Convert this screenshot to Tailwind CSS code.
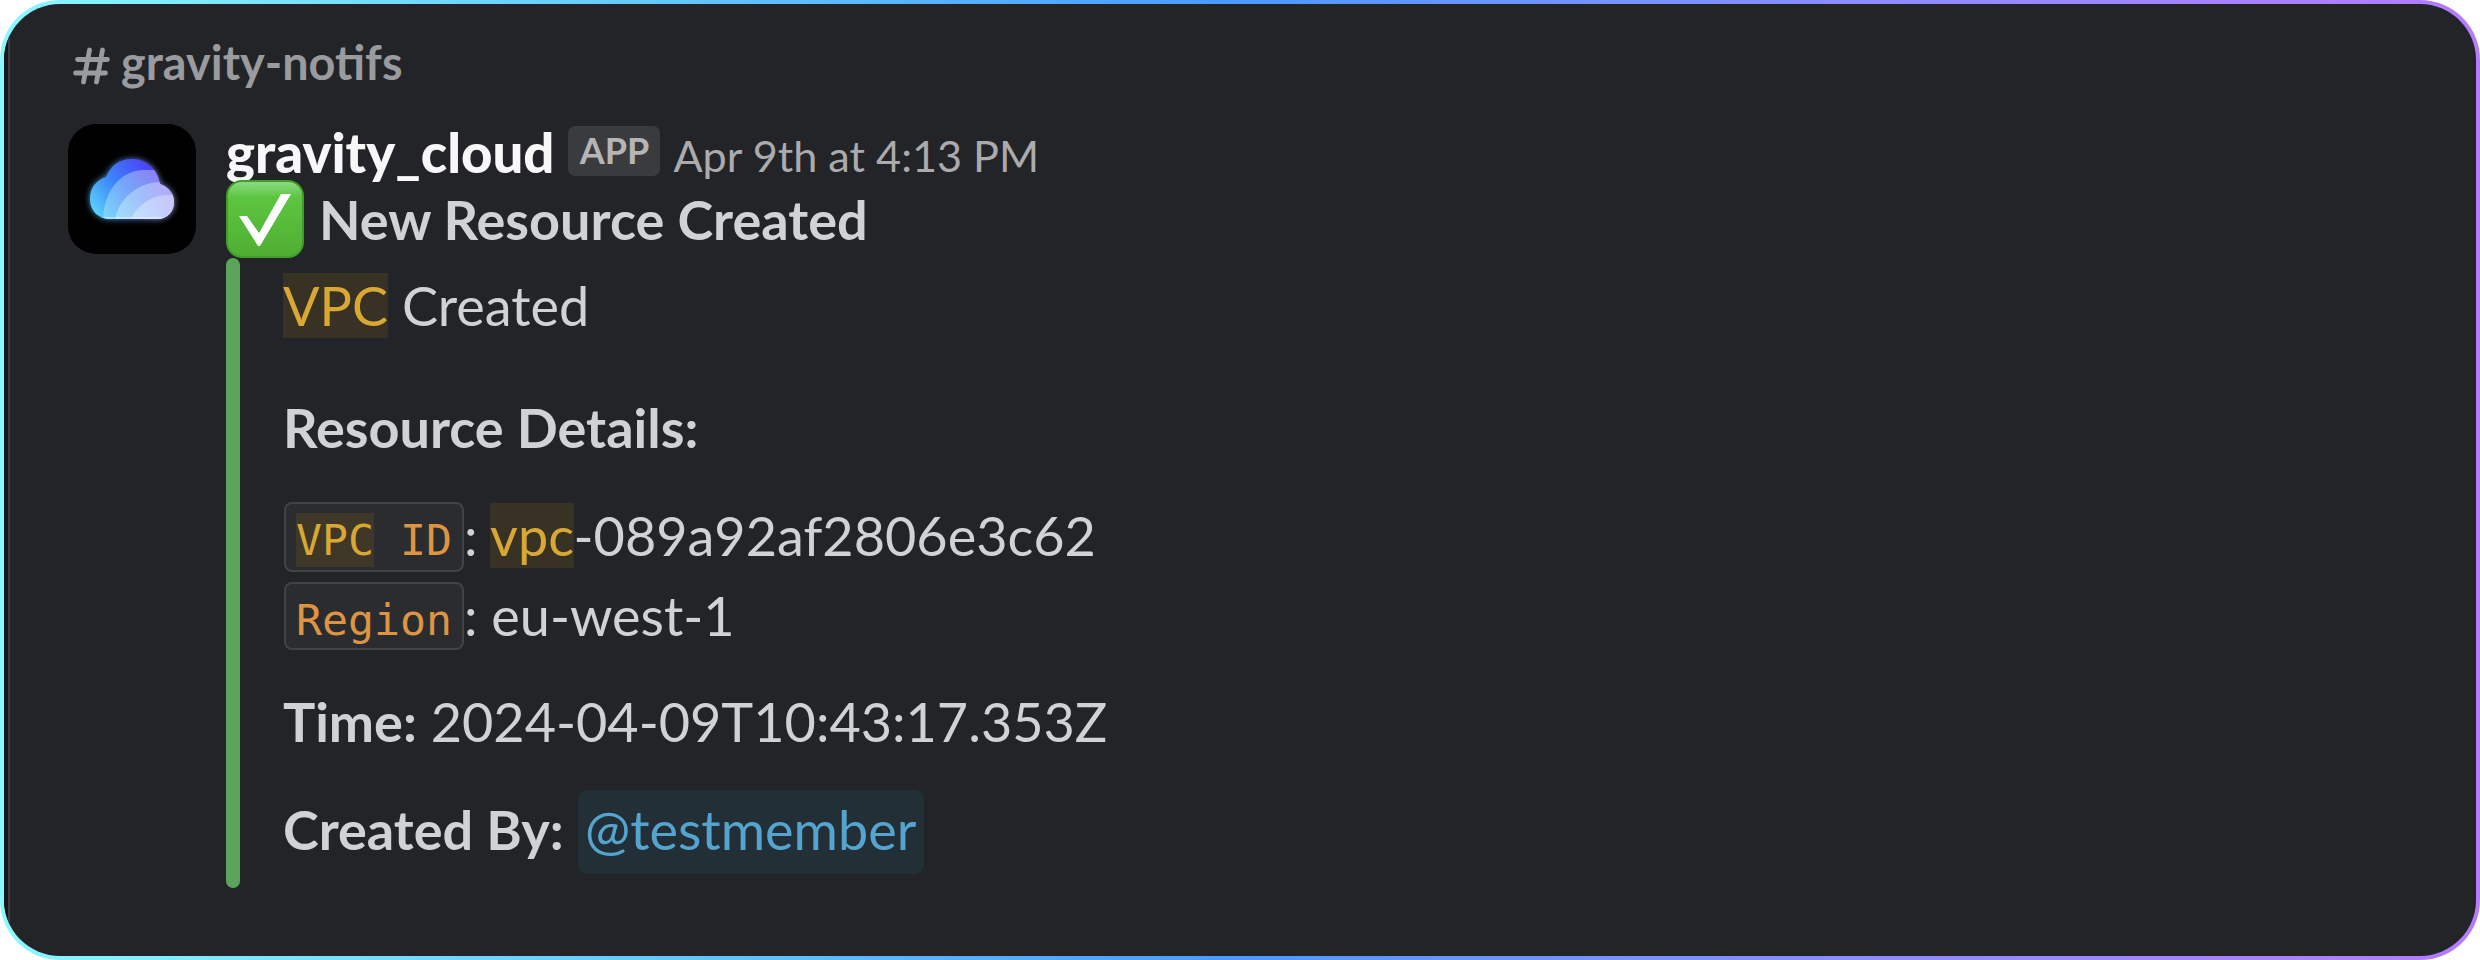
<!DOCTYPE html>
<html lang="en">
<head>
<meta charset="utf-8">
<title>gravity-notifs</title>
<script src="https://cdn.jsdelivr.net/npm/@tailwindcss/browser@4"></script>
</head>
<body class="bg-white">
<div class="w-[2480px] h-[960px] rounded-[60px] p-1 bg-linear-to-r from-[#8cf8ff] via-[#4a9aff] to-[#b57bff] font-['Lato',sans-serif] text-[#d1d2d3]">
  <div class="flex h-full rounded-[56px] overflow-hidden bg-[#232428]">
    <div class="w-1 shrink-0 bg-[#14161b]"></div>
    <div class="w-0.5 shrink-0 bg-[#3b3c40]"></div>
    <div class="flex-1 pl-[58px]">
      <div class="h-[120px] pt-[30px] pl-1 flex gap-[10px] text-[#9a9b9e] text-[46.8px] leading-[56px] font-bold">
        <svg class="w-[39px] h-[40px] mt-[12px]" viewBox="0 0 39 40" fill="none" stroke="currentColor" stroke-width="4.8" stroke-linecap="round"><path d="M17.500 4 11.500 36M30.500 4 24.500 36M5.500 13.500H35.500M3.500 27H33.500"/></svg>
        <span>gravity-notifs</span>
      </div>
      <div class="flex">
        <div class="w-32 h-[130px] shrink-0 rounded-[28px] bg-black mr-[30px]">
          <svg class="w-32 h-[130px]" viewBox="0 0 128 130">
            <defs>
              <linearGradient id="a" x1="20" y1="90" x2="82" y2="42" gradientUnits="userSpaceOnUse"><stop stop-color="#62dcfb"/><stop offset=".5" stop-color="#3b86f8"/><stop offset="1" stop-color="#4a42f8"/></linearGradient>
              <linearGradient id="b" x1="35" y1="92" x2="92" y2="50" gradientUnits="userSpaceOnUse"><stop stop-color="#7cd8fb"/><stop offset=".5" stop-color="#75a5fa"/><stop offset="1" stop-color="#8f7df6"/></linearGradient>
              <linearGradient id="d" x1="47" y1="94" x2="104" y2="60" gradientUnits="userSpaceOnUse"><stop stop-color="#a2e0fb"/><stop offset=".5" stop-color="#a0c0fa"/><stop offset="1" stop-color="#b5a8f8"/></linearGradient>
              <linearGradient id="f" x1="62" y1="95" x2="106" y2="72" gradientUnits="userSpaceOnUse"><stop stop-color="#c0e4fc"/><stop offset="1" stop-color="#c9c3fa"/></linearGradient>
              <linearGradient id="h" x1="22" y1="80" x2="106" y2="80" gradientUnits="userSpaceOnUse"><stop stop-color="#58d0ff"/><stop offset=".5" stop-color="#6a90ff"/><stop offset="1" stop-color="#c8c8ff"/></linearGradient>
              <filter id="g" x="-30%" y="-30%" width="160%" height="160%"><feGaussianBlur stdDeviation="3"/></filter>
              <clipPath id="c"><path id="p" d="M42 95C30 95 22 86 22 75C22 64 28 56 38 53C43 41 52 35 64 35C79 35 90 46 92 60C101 63 106 70 106 78C106 88 99 95 89 95Z"/></clipPath>
            </defs>
            <use href="#p" fill="url(#h)" filter="url(#g)" opacity=".8"/>
            <g clip-path="url(#c)">
              <rect width="128" height="130" fill="url(#a)"/>
              <path d="M35 97C35 66 54 46 76 46H110V97Z" fill="url(#b)"/>
              <path d="M47 97C49 76 70 58 92 58H110V97Z" fill="url(#d)"/>
              <path d="M62 97C68 82 84 71 99 71H110V97Z" fill="url(#f)"/>
              <path d="M30 94H100" stroke="#fff" stroke-opacity=".35" stroke-width="2"/>
            </g>
          </svg>
        </div>
        <div>
          <div class="flex h-14 items-start">
            <span class="text-[54.5px] leading-[66px] font-black text-[#f8f8f8] -mt-[5px]">gravity_cloud</span>
            <span class="ml-[14px] mt-[2px] w-[92px] h-[50px] rounded-[7px] bg-[#3a3b3f] text-[#b5b5b6] text-[36px] leading-[49px] font-bold text-center">APP</span>
            <span class="ml-[13px] mt-[4px] text-[43.2px] leading-[54px] text-[#ababad]">Apr 9th at 4:13 PM</span>
          </div>
          <div class="flex h-[78px]">
            <svg class="w-[78px] h-[78px] mr-[15px] relative" viewBox="0 0 78 78">
              <defs>
                <linearGradient id="e" x1="0" y1="0" x2="0" y2="1"><stop stop-color="#8edc85"/><stop offset=".22" stop-color="#5cc53f"/><stop offset="1" stop-color="#4fae33"/></linearGradient>
              </defs>
              <rect x="1" y="1" width="76" height="76" rx="15" fill="url(#e)" stroke="#419c2a" stroke-width="2"/>
              <path d="M13 36H21L33 53 55 14H65L34 66H32Z" fill="#fff"/>
            </svg>
            <span class="text-[54px] leading-[80px] font-bold">New Resource Created</span>
          </div>
          <div class="flex h-[630px]">
            <div class="w-[14px] rounded-full bg-[#5ba55b] mr-11"></div>
            <div class="text-[54px] leading-[80px] whitespace-nowrap">
              <div class="mt-[8px] -ml-px"><span class="bg-[#373223] text-[#d9a834]">VPC</span> Created</div>
              <div class="mt-[42px] -ml-px font-bold">Resource Details:</div>
              <div class="mt-[28px] flex h-20">
                <span class="w-[180px] h-[70px] mt-[6px] rounded-lg border-2 border-[#424347] bg-[#2b2c30] pl-[10px] font-['DejaVu_Sans_Mono',monospace] text-[43.2px] leading-[73px] text-[#de9440]"><span class="bg-[#3f3727] text-[#d9a834] py-0.5">VPC</span> ID</span>
                <span>: <span class="bg-[#373223] text-[#d9a834]">vpc</span>-089a92af2806e3c62</span>
              </div>
              <div class="flex h-20">
                <span class="w-[180px] h-[68px] mt-[6px] rounded-lg border-2 border-[#424347] bg-[#2b2c30] pl-[10px] font-['DejaVu_Sans_Mono',monospace] text-[43.2px] leading-[73px] text-[#de9440]">Region</span>
                <span>: eu-west-1</span>
              </div>
              <div class="mt-[26px] -ml-px"><b>Time:</b> 2024-04-09T10:43:17.353Z</div>
              <div class="mt-[28px] -ml-px flex"><b>Created By:</b><span class="ml-[14px] h-[84px] w-[346px] rounded-[9px] bg-[#232f36] text-center text-[#55a4cf]">@testmember</span></div>
            </div>
          </div>
        </div>
      </div>
    </div>
  </div>
</div>
</body>
</html>
